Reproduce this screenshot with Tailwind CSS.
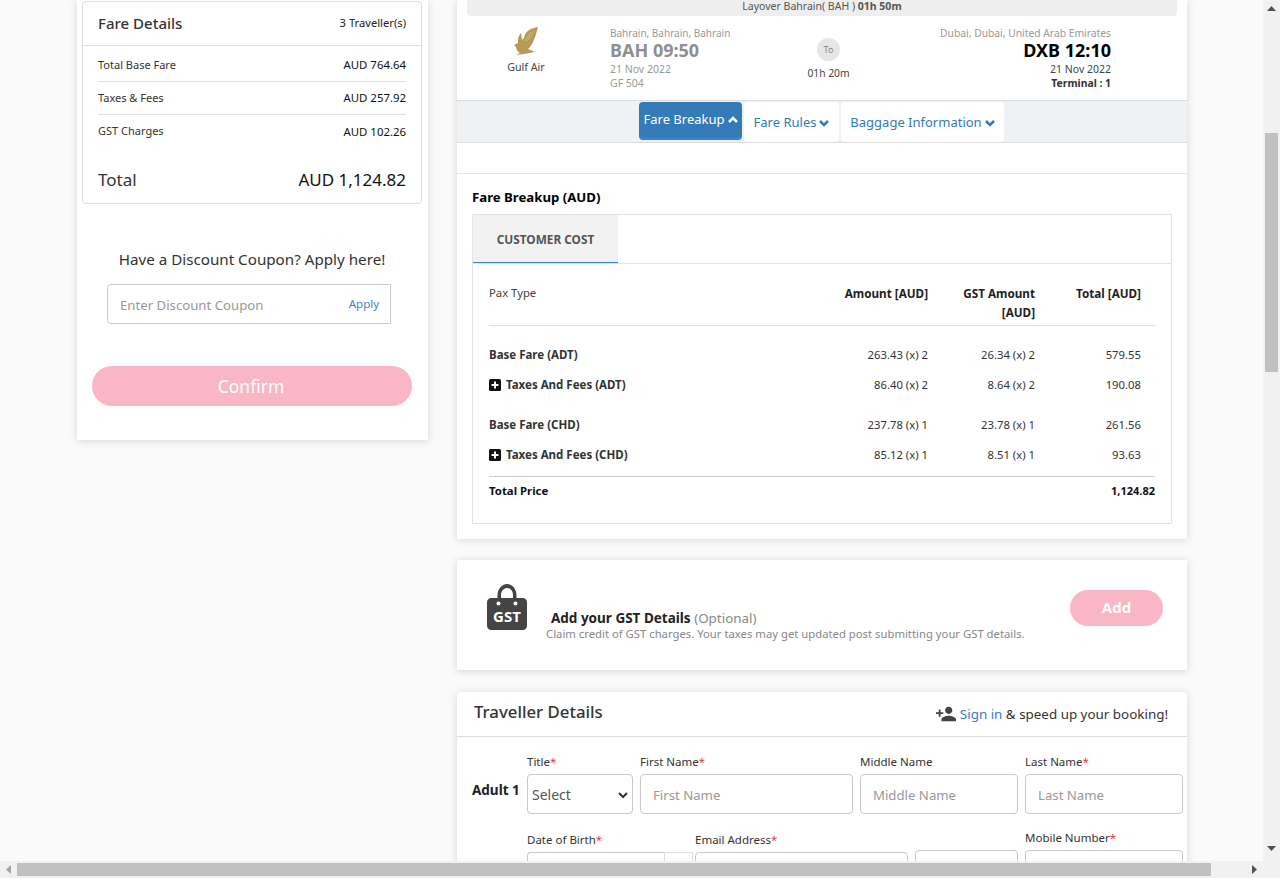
<!DOCTYPE html>
<html lang="en">
<head>
<meta charset="UTF-8">
<title>Flight Booking Review</title>
<script src="https://cdn.jsdelivr.net/npm/@tailwindcss/browser@4"></script>
</head>
<body class="h-[878px] w-[1280px] overflow-hidden bg-[#f1f1f1] font-['Noto_Sans','Liberation_Sans',sans-serif] text-[11.3px] text-[#333]">
<div class="flex h-[861px]">
  <!-- page area -->
  <div class="flex h-[861px] w-[1263px] overflow-hidden bg-[#fafafa] pl-[77px]">

    <!-- left column -->
    <div class="w-[351px] shrink-0">
      <div class="h-[440px] bg-white pt-px pr-[6px] pl-[5px] shadow-[0_1px_8px_rgba(0,0,0,0.15)]">
        <div class="h-[203px] rounded-[4px] border border-[#dddddd]">
          <div class="flex h-[44px] items-center justify-between border-b border-[#dddddd] px-[15px]">
            <span class="text-[15px] font-medium text-[#333]">Fare Details</span>
            <span class="text-[11.2px] text-[#222]">3 Traveller(s)</span>
          </div>
          <div class="px-[15px] text-[11px]">
            <div class="flex h-[36px] items-center justify-between border-b border-[#e0e0e8] pt-[3px]"><span>Total Base Fare</span><span class="text-[11.4px] text-[#111]">AUD 764.64</span></div>
            <div class="flex h-[33px] items-center justify-between border-b border-[#e0e0e8]"><span>Taxes &amp; Fees</span><span class="text-[11.4px] text-[#111]">AUD 257.92</span></div>
            <div class="flex h-[33px] items-center justify-between"><span>GST Charges</span><span class="text-[11.4px] text-[#111]">AUD 102.26</span></div>
            <div class="flex items-center justify-between pt-[19px] text-[17px]"><span>Total</span><span class="text-[#111]">AUD 1,124.82</span></div>
          </div>
        </div>
        <p class="mt-[44px] text-center text-[15.2px] leading-[22px] text-[#333]">Have a Discount Coupon? Apply here!</p>
        <div class="mt-[14px] ml-[25px] flex h-[40px] w-[284px] rounded-l-[4px] border border-[#c8ccd4]">
          <span class="flex-1 pl-[12px] text-[13.2px] leading-[40px] text-[#999]">Enter Discount Coupon</span>
          <span class="w-[52px] text-center text-[11.6px] leading-[38px] text-[#4a7fc7]">Apply</span>
        </div>
        <button class="mt-[42px] ml-[10px] block h-[40px] w-[320px] rounded-[20px] bg-[#f9b6c5] pr-[2px] text-[17.500px] text-white">Confirm</button>
      </div>
    </div>

    <!-- right column -->
    <div class="ml-[29px] w-[730px] shrink-0">
      <div class="h-[539px] bg-white shadow-[0_1px_8px_rgba(0,0,0,0.15)]">
        <div class="mx-[10px] h-[16px] rounded-b-[4px] bg-[#eeeeee] text-center text-[10.500px] leading-[12px] text-[#555]">Layover Bahrain( BAH ) <b>01h 50m</b></div>

        <div class="grid h-[85px] grid-cols-[153px_170px_122px_1fr] border-b border-[#dddddd] pr-[76px]">
          <div class="flex flex-col items-center pt-[11px] pr-[15px]">
            <svg width="26" height="28" viewBox="0 0 26 28"><path fill="#b69a56" d="M25 0C18 1 12 4 11 11L9 13 8 6C5 9 5 13 5 16L1 18 3 20C3 23 5 25 7 26L3 28 11 27 22 25 15 22C20 18 23 8 25 0z"/><path d="M21 4L14 14M18 5L12 14" stroke="#d9c896" stroke-width=".7" fill="none"/></svg>
            <span class="mt-[4px] text-[10.700px] text-[#444]">Gulf Air</span>
          </div>
          <div class="pt-[10px] text-[10.500px] text-[#9a9a9a]">
            <div class="text-[10px] leading-[14px]">Bahrain, Bahrain, Bahrain</div>
            <div class="text-[18px] leading-[21px] font-bold text-[#8f8f8f]">BAH 09:50</div>
            <div class="mt-[1px] leading-[14px]">21 Nov 2022</div>
            <div class="leading-[14px]">GF 504</div>
          </div>
          <div class="flex flex-col items-center pt-[22px] pr-[25px]">
            <span class="flex size-[23px] items-center justify-center rounded-full bg-[#e6e6e6] text-[9px] text-[#888]">To</span>
            <span class="mt-[5px] text-[10.300px] text-[#444]">01h 20m</span>
          </div>
          <div class="pt-[10px] text-right text-[10.500px]">
            <div class="text-[10.300px] leading-[14px] text-[#9a9a9a]">Dubai, Dubai, United Arab Emirates</div>
            <div class="text-[18px] leading-[21px] font-bold text-black">DXB 12:10</div>
            <div class="mt-[1px] leading-[14px] text-[#444]">21 Nov 2022</div>
            <div class="text-[10.400px] leading-[14px] font-bold text-[#333]">Terminal : 1</div>
          </div>
        </div>

        <div class="flex h-[42px] justify-center gap-[2px] border-b border-[#dddddd] bg-[#eff2f5] pt-px pr-[1px]">
          <button class="flex h-[38px] w-[103px] items-center justify-center gap-[3px] rounded-[4px] border-b-[3px] border-b-[#2f86dd] bg-[#337ab7] text-[13px] text-white">Fare Breakup
            <svg width="10" height="8" viewBox="0 0 10 8"><polyline points="1,6 5,2 9,6" fill="none" stroke="#fff" stroke-width="2.5"/></svg>
          </button>
          <button class="flex h-[40px] w-[95px] items-center justify-center gap-[3px] rounded-[4px] bg-white pt-[2px] text-[13px] text-[#337ab7]">Fare Rules
            <svg width="10" height="8" viewBox="0 0 10 8"><polyline points="1,2 5,6 9,2" fill="none" stroke="#337ab7" stroke-width="2.5"/></svg>
          </button>
          <button class="flex h-[40px] w-[163px] items-center justify-center gap-[3px] rounded-[4px] bg-white pt-[2px] text-[13px] text-[#337ab7]">Baggage Information
            <svg width="10" height="8" viewBox="0 0 10 8"><polyline points="1,2 5,6 9,2" fill="none" stroke="#337ab7" stroke-width="2.5"/></svg>
          </button>
        </div>

        <div class="h-[31px] border-b border-[#e5e5e5]"></div>

        <div class="px-[15px]">
          <h3 class="mt-[14px] text-[13.200px] leading-[19px] font-bold text-black">Fare Breakup (AUD)</h3>
          <div class="mt-[7px] h-[310px] border border-[#e3e3e3]">
            <div class="h-[49px] border-b border-[#e3e3e3]">
              <div class="h-[48px] w-[145px] border-b border-b-[#2f86dd] bg-[#f2f2f2] text-center text-[11.800px] leading-[49px] font-bold text-[#555]">CUSTOMER COST</div>
            </div>
            <div class="mx-[16px]">
              <div class="grid h-[62px] grid-cols-[1fr_110px_107px_106px_14px] border-b border-[#dddddd] pt-[20px] leading-[19px]">
                <span class="leading-[17px] text-[#444]">Pax Type</span>
                <b class="text-right text-[11.700px] text-[#222]">Amount [AUD]</b>
                <b class="text-right text-[11.700px] text-[#222]">GST Amount [AUD]</b>
                <b class="text-right text-[11.700px] text-[#222]">Total [AUD]</b>
                <span></span>
              </div>
              <div class="mt-[14px] grid auto-rows-[30px] grid-cols-[1fr_110px_107px_106px_14px] leading-[30px] text-[#333]">
                <b class="text-[11.500px]">Base Fare (ADT)</b><span class="text-right">263.43 (x) 2</span><span class="text-right">26.34 (x) 2</span><span class="text-right">579.55</span><span></span>
                <b class="flex items-center gap-[5px] text-[11.500px]"><svg width="12" height="12" viewBox="0 0 12 12"><rect width="12" height="12" rx="1.5" fill="#111"/><path d="M5 2.5h2V5h2.500v2H7v2.500H5V7H2.500V5H5z" fill="#fff"/></svg>Taxes And Fees (ADT)</b><span class="text-right">86.40 (x) 2</span><span class="text-right">8.64 (x) 2</span><span class="text-right">190.08</span><span></span>
              </div>
              <div class="mt-[10px] grid h-[67px] auto-rows-[30px] grid-cols-[1fr_110px_107px_106px_14px] border-b border-[#cccccc] leading-[30px] text-[#333]">
                <b class="text-[11.500px]">Base Fare (CHD)</b><span class="text-right">237.78 (x) 1</span><span class="text-right">23.78 (x) 1</span><span class="text-right">261.56</span><span></span>
                <b class="flex items-center gap-[5px] text-[11.500px]"><svg width="12" height="12" viewBox="0 0 12 12"><rect width="12" height="12" rx="1.5" fill="#111"/><path d="M5 2.5h2V5h2.500v2H7v2.500H5V7H2.500V5H5z" fill="#fff"/></svg>Taxes And Fees (CHD)</b><span class="text-right">85.12 (x) 1</span><span class="text-right">8.51 (x) 1</span><span class="text-right">93.63</span><span></span>
              </div>
              <div class="flex justify-between pt-[5px] leading-[18px] font-bold text-[#111]"><span class="text-[11.400px]">Total Price</span><span class="text-[11px]">1,124.82</span></div>
            </div>
          </div>
        </div>
      </div>

      <div class="mt-[21px] flex h-[110px] bg-white shadow-[0_1px_8px_rgba(0,0,0,0.15)]">
        <svg class="mt-[24px] ml-[30px] shrink-0" width="40" height="46" viewBox="0 0 40 46">
          <path fill="#444" d="M4 14h6.500v-3C10.500 5 15 0 20 0s9.500 5 9.500 11v3H36c2 0 4 2 4 4v24c0 2-2 4-4 4H4c-2 0-4-2-4-4V18c0-2 2-4 4-4zM14 14h12v-3c0-4-3-7-6-7s-6 3-6 7z"/>
          <circle cx="11.500" cy="19.500" r="2" fill="#fff"/><circle cx="28.500" cy="19.500" r="2" fill="#fff"/>
          <text x="20" y="38" text-anchor="middle" fill="#fff" font-family="'Noto Sans',sans-serif" font-size="15" font-weight="700">GST</text>
        </svg>
        <div class="mt-[49px] ml-[19px] w-[508px]">
          <div class="pl-[5px] text-[13.500px] leading-[18px] text-[#888]"><b class="text-[#222]">Add your GST Details</b> <span class="text-[13.400px]">(Optional)</span></div>
          <div class="text-[11.300px] leading-[14px] text-[#888]">Claim credit of GST charges. Your taxes may get updated post submitting your GST details.</div>
        </div>
        <button class="mt-[30px] ml-[16px] h-[36px] w-[93px] rounded-[18px] bg-[#f9b6c5] pb-[2px] text-[15px] font-bold text-white">Add</button>
      </div>

      <div class="mt-[22px] rounded-t-[4px] bg-white pb-[40px] shadow-[0_1px_8px_rgba(0,0,0,0.15)]">
        <div class="flex h-[45px] items-center justify-between border-b border-[#dddddd] pr-[19px] pl-[17px]">
          <span class="pb-[5px] text-[16.800px] font-medium text-[#333]">Traveller Details</span>
          <span class="flex items-center gap-[4px] text-[13.400px] text-[#333]">
            <svg width="20" height="20" viewBox="1 2 22 20"><path fill="#444" d="M15 12c2.210 0 4-1.790 4-4s-1.790-4-4-4-4 1.790-4 4 1.790 4 4 4zm-9-2V7H4v3H1v2h3v3h2v-3h3v-2H6zm9 4c-2.670 0-8 1.340-8 4v2h16v-2c0-2.660-5.330-4-8-4z"/></svg>
            <span><span class="text-[#3a7bd5]">Sign in</span> &amp; speed up your booking!</span>
          </span>
        </div>
        <div class="flex pt-[16px] pl-[15px]">
          <b class="w-[55px] shrink-0 pt-[28px] text-[13.500px] leading-[18px] text-[#222]">Adult 1</b>
          <div class="grid grid-cols-[106px_213px_158px_158px] gap-x-[7px] text-[11.500px]">
            <label class="leading-[18px] text-[#333]">Title<span class="text-[#e33]">*</span>
              <span class="mt-[3px] flex h-[40px] items-center justify-between rounded-[4px] border border-[#c8c8c8] pt-[2px] pr-[4px] pl-[4px] text-[14px] text-[#555]">Select
                <svg width="10" height="7" viewBox="0 0 10 7"><polyline points="1,1 5,5 9,1" fill="none" stroke="#333" stroke-width="2"/></svg></span>
            </label>
            <label class="leading-[18px] text-[#333]">First Name<span class="text-[#e33]">*</span>
              <span class="mt-[3px] block h-[40px] rounded-[4px] border border-[#c8c8c8] pl-[12px] text-[13.200px] leading-[40px] text-[#999]">First Name</span>
            </label>
            <label class="leading-[18px] text-[#333]">Middle Name
              <span class="mt-[3px] block h-[40px] rounded-[4px] border border-[#c8c8c8] pl-[12px] text-[13.200px] leading-[40px] text-[#999]">Middle Name</span>
            </label>
            <label class="leading-[18px] text-[#333]">Last Name<span class="text-[#e33]">*</span>
              <span class="mt-[3px] block h-[40px] rounded-[4px] border border-[#c8c8c8] pl-[12px] text-[13.200px] leading-[40px] text-[#999]">Last Name</span>
            </label>
          </div>
        </div>
        <div class="mt-[16px] ml-[70px] grid grid-cols-[168px_220px_110px_158px] text-[11.500px] leading-[18px] text-[#333]">
          <div class="pt-[1px] pr-[2px]">Date of Birth<span class="text-[#e33]">*</span>
            <div class="mt-[3px] flex h-[20px]"><div class="w-[137px] rounded-tl-[4px] border-t border-l border-[#c8c8c8]"></div><div class="flex-1 border-t border-r border-l border-[#dddddd]"></div></div>
          </div>
          <div class="pt-[1px] pr-[7px]">Email Address<span class="text-[#e33]">*</span><div class="mt-[3px] h-[20px] rounded-t-[4px] border border-[#c8c8c8]"></div></div>
          <div class="pt-[20px] pr-[7px]"><div class="h-[20px] rounded-t-[4px] border border-[#c8c8c8]"></div></div>
          <div class="-mt-[1px]">Mobile Number<span class="text-[#e33]">*</span><div class="mt-[3px] h-[20px] rounded-t-[4px] border border-[#c8c8c8]"></div></div>
        </div>
      </div>
    </div>
  </div>

  <!-- vertical scrollbar -->
  <div class="flex w-[17px] shrink-0 flex-col items-center bg-[#f1f1f1]">
    <svg class="mt-[6px]" width="9" height="5" viewBox="0 0 9 5"><path d="M4.500 0L9 5H0z" fill="#505050"/></svg>
    <div class="mt-[122px] h-[239px] w-[13px] bg-[#c1c1c1]"></div>
    <svg class="mt-[474px]" width="9" height="5" viewBox="0 0 9 5"><path d="M0 0h9L4.500 5z" fill="#505050"/></svg>
  </div>
</div>

<!-- horizontal scrollbar -->
<div class="flex h-[17px] items-center bg-[#f1f1f1]">
  <svg class="ml-[6px]" width="5" height="9" viewBox="0 0 5 9"><path d="M5 0v9L0 4.500z" fill="#a3a3a3"/></svg>
  <div class="ml-[6px] h-[13px] w-[1194px] bg-[#c1c1c1]"></div>
  <svg class="ml-[41px]" width="5" height="9" viewBox="0 0 5 9"><path d="M0 0l5 4.500L0 9z" fill="#505050"/></svg>
</div>
</body>
</html>
